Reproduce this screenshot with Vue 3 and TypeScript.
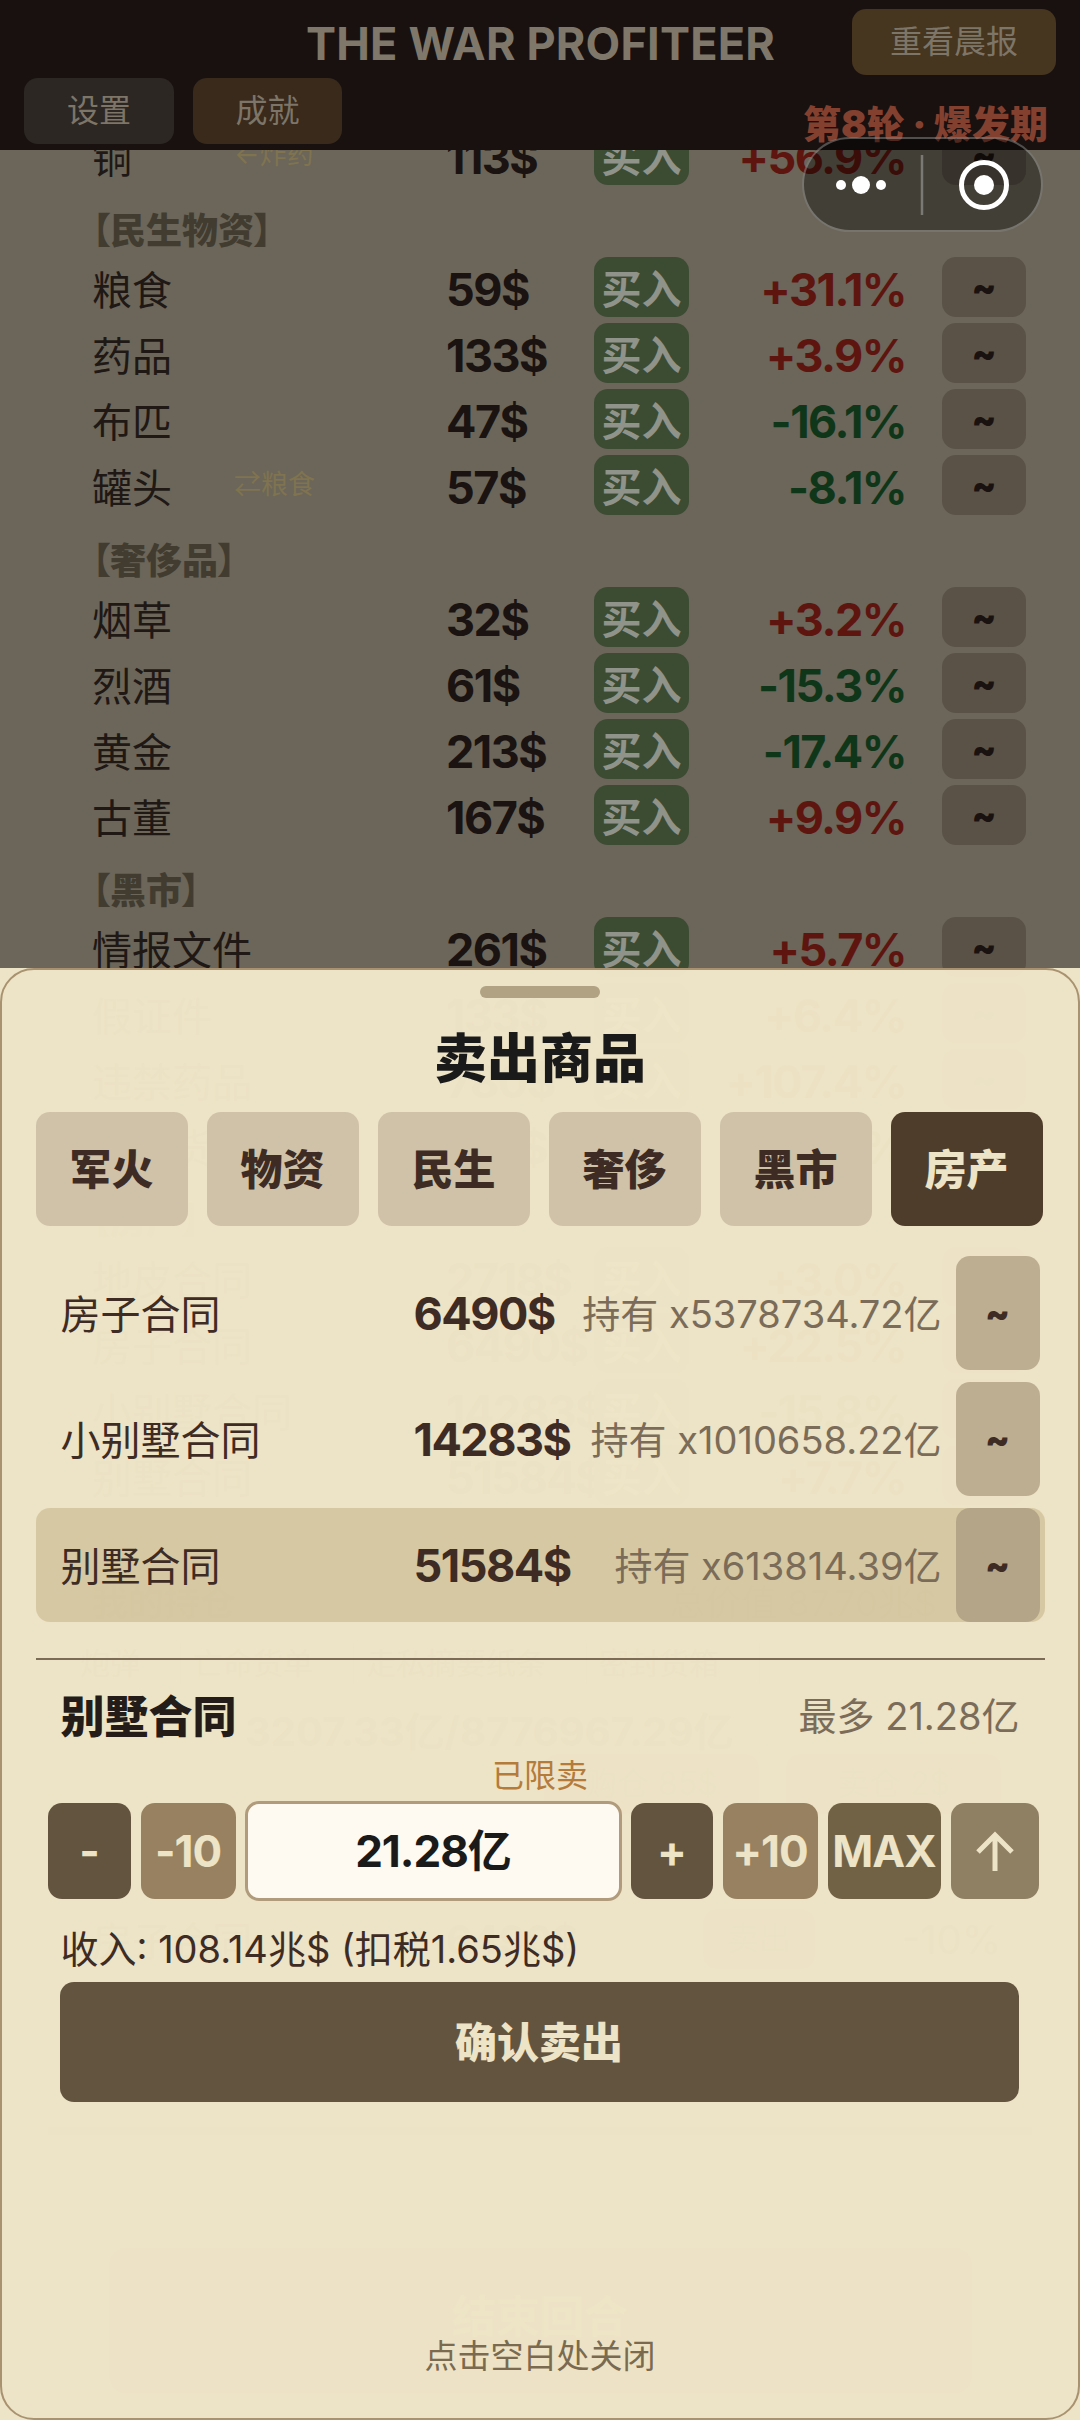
<script setup lang="ts">
interface Row { name: string; sub?: string; price: string; pct: string }
interface Section { title?: string; rows: Row[] }

const sections: Section[] = [
  { rows: [{ name: '铜', sub: '←炸药', price: '113$', pct: '+56.9%' }] },
  { title: '【民生物资】', rows: [
    { name: '粮食', price: '59$', pct: '+31.1%' },
    { name: '药品', price: '133$', pct: '+3.9%' },
    { name: '布匹', price: '47$', pct: '-16.1%' },
    { name: '罐头', sub: '⇄粮食', price: '57$', pct: '-8.1%' },
  ] },
  { title: '【奢侈品】', rows: [
    { name: '烟草', price: '32$', pct: '+3.2%' },
    { name: '烈酒', price: '61$', pct: '-15.3%' },
    { name: '黄金', price: '213$', pct: '-17.4%' },
    { name: '古董', price: '167$', pct: '+9.9%' },
  ] },
  { title: '【黑市】', rows: [
    { name: '情报文件', price: '261$', pct: '+5.7%' },
    { name: '假证件', price: '133$', pct: '+6.4%' },
    { name: '违禁药品', price: '780$', pct: '+107.4%' },
    { name: '走私货', price: '418$', pct: '-2.6%' },
  ] },
  { title: '【房产】', rows: [
    { name: '地皮合同', price: '2718$', pct: '+3.0%' },
    { name: '房子合同', price: '6490$', pct: '+22.5%' },
    { name: '小别墅合同', price: '14283$', pct: '-15.8%' },
    { name: '别墅合同', price: '51584$', pct: '+7.7%' },
  ] },
]

const chips = ['炮弹', '亡命货单', '走私摘要纸条', '密封货箱']
const tabs = ['军火', '物资', '民生', '奢侈', '黑市', '房产']
const holdings = [
  { name: '房子合同', price: '6490$', hold: '持有 x5378734.72亿', on: false },
  { name: '小别墅合同', price: '14283$', hold: '持有 x1010658.22亿', on: false },
  { name: '别墅合同', price: '51584$', hold: '持有 x613814.39亿', on: true },
]
</script>

<template>
  <div class="screen">
    <header class="top">
      <div class="top-line">
        <div class="game-title">THE WAR PROFITEER</div>
        <button class="tb tb-gold replay">重看晨报</button>
      </div>
      <div class="top-line second">
        <button class="tb tb-grey">设置</button>
        <button class="tb tb-brown">成就</button>
        <div class="round">第8轮 · 爆发期</div>
      </div>
    </header>

    <div class="scroller">
      <section v-for="(s, i) in sections" :key="i" class="sec">
        <div v-if="s.title" class="sec-title">{{ s.title }}</div>
        <div class="rows">
          <div v-for="r in s.rows" :key="r.name" class="row">
            <span class="r-name">{{ r.name }}</span>
            <span class="r-sub">{{ r.sub }}</span>
            <span class="r-price">{{ r.price }}</span>
            <button class="r-buy">买入</button>
            <span class="r-pct" :class="r.pct.startsWith('+') ? 'up' : 'down'">{{ r.pct }}</span>
            <button class="r-more">~</button>
          </div>
        </div>
      </section>

      <div class="assets">
        <div class="assets-head"><span>我的持仓</span><span class="muted">总价值 87.70兆$</span></div>
        <div class="assets-list"><span v-for="c in chips" :key="c" class="chip">{{ c }}</span></div>
        <div class="assets-cap">3207.33亿/8776967.29亿</div>
        <div class="assets-btns"><span class="g-btn">购仓 85$</span><span class="g-btn">卖仓 2$</span></div>
        <div class="assets-row"><span class="ar-name">房子合同</span><span class="ar-price">6490$</span><span class="g-btn tall">卖出</span><span class="ar-pct">-10%</span></div>
      </div>
      <div class="ghost-bar"></div>
      <div class="end-turn">结束回合</div>
    </div>

    <div class="capsule">
      <svg class="cap-ico" width="241" height="95" viewBox="0 0 241 95" fill="none">
        <circle cx="39" cy="48" r="5" fill="#fff" />
        <circle cx="59" cy="48" r="9" fill="#fff" />
        <circle cx="79" cy="48" r="5" fill="#fff" />
        <path d="M120 18V78" stroke="rgba(255,255,255,.3)" stroke-width="2.5" />
        <circle cx="182" cy="48" r="22.5" stroke="#fff" stroke-width="5" />
        <circle cx="182" cy="48" r="10" fill="#fff" />
      </svg>
    </div>

    <aside class="sheet">
      <div class="frame">
        <div class="handle"></div>
        <h2 class="sheet-title">卖出商品</h2>
        <nav class="tabs">
          <button v-for="t in tabs" :key="t" class="tab" :class="{ active: t === '房产' }">{{ t }}</button>
        </nav>
        <div class="holds">
          <div v-for="h in holdings" :key="h.name" class="hold" :class="{ on: h.on }">
            <span class="h-name">{{ h.name }}</span>
            <span class="h-price">{{ h.price }}</span>
            <span class="h-qty">{{ h.hold }}</span>
            <button class="h-more">~</button>
          </div>
        </div>
        <div class="rule"></div>
        <div class="pick">
          <span class="pick-name">别墅合同</span>
          <span class="pick-max">最多 21.28亿</span>
        </div>
        <div class="limit">已限卖</div>
        <div class="stepper">
          <button class="st dark">-</button>
          <button class="st tan">-10</button>
          <div class="qty">21.28亿</div>
          <button class="st dark">+</button>
          <button class="st tan">+10</button>
          <button class="st olive">MAX</button>
          <button class="st khaki">
            <svg width="40" height="40" viewBox="0 0 40 40" fill="none" stroke="#ede3c6" stroke-width="5">
              <path d="M20 40V4M3 21 20 4l17 17" />
            </svg>
          </button>
        </div>
        <div class="income">收入: 108.14兆$ (扣税1.65兆$)</div>
        <button class="confirm">确认卖出</button>
        <div class="close-hint">点击空白处关闭</div>
      </div>
    </aside>
  </div>
</template>

<style>
html, body { margin: 0; padding: 0; background: #6b6659; }
</style>

<style scoped>
* { box-sizing: border-box; }
button { border: 0; padding: 0; margin: 0; font: inherit; color: inherit; }
.screen {
  position: relative;
  width: 1080px;
  height: 2420px;
  overflow: hidden;
  display: flex;
  flex-direction: column;
  background: #6b6659;
  font-family: Inter, "Noto Sans CJK SC", sans-serif;
  color: #1c1512;
}
.top {
  position: relative;
  z-index: 2;
  flex: none;
  height: 150px;
  background: #181110;
  padding: 9px 24px 0;
}
.top-line { display: flex; align-items: flex-start; height: 69px; position: relative; }
.second { height: 66px; gap: 19px; }
.game-title {
  position: absolute;
  left: 282px;
  top: 11px;
  white-space: nowrap;
  font-size: 45px;
  line-height: 48px;
  font-weight: 700;
  letter-spacing: 0.2px;
  color: #7f786a;
}
.replay { margin-left: auto; }
.tb {
  height: 66px;
  border-radius: 14px;
  font-size: 32px;
  line-height: 66px;
  color: #7d7567;
  text-align: center;
}
.tb-gold { width: 204px; background: #46351f; }
.tb-grey { width: 150px; background: #2d2723; }
.tb-brown { width: 149px; background: #392a1c; }
.round {
  position: absolute;
  right: 8px;
  top: 26px;
  font-size: 38px;
  line-height: 40px;
  font-weight: 900;
  color: #84402f;
  white-space: nowrap;
}
.scroller { flex: none; height: 2270px; overflow: hidden; margin-top: -25px; position: relative; z-index: 0; }
.sec { padding-left: 92px; }
.sec-title {
  height: 72px;
  padding-top: 24px;
  font-size: 36px;
  line-height: 44px;
  font-weight: 900;
  font-feature-settings: "palt";
  color: #423c30;
}
.rows { display: flex; flex-direction: column; gap: 6px; }
.row {
  display: grid;
  grid-template-columns: 142px 212px 148px 95px 217px 36px 84px;
  grid-template-rows: 60px;
  align-items: center;
  height: 60px;
  white-space: nowrap;
}
.r-name { font-size: 40px; line-height: 60px; margin-top: 7px; color: #1f1815; grid-column: 1; }
.r-sub { font-size: 27px; line-height: 40px; color: #7f7350; }
.r-price { font-size: 45px; letter-spacing: -1.5px; line-height: 60px; margin-top: 6px; font-weight: 700; color: #1a1311; }
.r-buy { grid-column: 4; height: 60px; border-radius: 14px; background: #3c4c33; color: #8f938a; font-size: 40px; font-weight: 700; }
.r-pct { grid-column: 5; text-align: right; font-size: 45px; letter-spacing: -1.5px; line-height: 60px; margin-top: 6px; font-weight: 700; }
.up { color: #5e1510; }
.down { color: #10361a; }
.r-more { grid-column: 7; height: 60px; border-radius: 14px; background: #5a5246; font-size: 36px; font-weight: 900; color: #1a1210; }
.assets { padding: 78px 143px 0 92px; color: #1c1512; }
.assets-head { display: flex; justify-content: space-between; font-size: 36px; line-height: 40px; font-weight: 700; }
.muted { font-weight: 400; }
.assets-list { display: flex; margin: 20px -60px 0 -12px; font-size: 30px; line-height: 40px; }
.chip { padding: 0 40px 0 0; margin-right: 12px; border-right: 1px solid #3c382f; }
.assets-cap { margin: 27px 0 0 153px; font-size: 40px; line-height: 44px; font-weight: 700; }
.assets-btns { display: flex; gap: 27px; margin: 0 -64px 0 452px; }
.g-btn { width: 215px; height: 60px; line-height: 60px; text-align: center; background: #5a5246; border-radius: 14px; font-size: 32px; }
.assets-row { display: flex; align-items: center; margin-top: 95px; font-size: 40px; white-space: nowrap; }
.ar-name { width: 354px; }
.ar-price { width: 257px; font-weight: 700; }
.g-btn.tall { width: 112px; height: 60px; }
.ar-pct { width: 186px; margin-right: -64px; text-align: right; }
.ghost-bar { margin: 158px 48px 0; height: 8px; background: #3c382f; }
.end-turn {
  margin: 113px auto 0;
  width: 863px;
  height: 145px;
  border-radius: 16px;
  background: #5a5246;
  text-align: center;
  padding-top: 44px;
  line-height: 50px;
  font-size: 44px;
  font-weight: 700;
  color: #8d8778;
}
.capsule {
  position: absolute;
  z-index: 3;
  left: 802px;
  top: 137px;
  width: 241px;
  height: 95px;
  border-radius: 48px;
  background: rgba(0, 0, 0, 0.38);
  border: 2px solid rgba(255, 255, 255, 0.28);
}
.cap-ico { position: absolute; left: -2px; top: -2px; }
.sheet {
  position: absolute;
  z-index: 4;
  left: 0;
  right: 0;
  top: 968px;
  bottom: 0;
  background: rgba(240, 230, 200, 0.98);
  color: #3e2c24;
}
.frame {
  height: 100%;
  border: 2.5px solid #a89270;
  border-radius: 34px;
  display: flex;
  flex-direction: column;
  padding: 15.5px 33.5px 0;
}
.handle { flex: none; align-self: center; width: 120px; height: 12px; border-radius: 6px; background: #b0a283; }
.sheet-title {
  flex: none;
  margin: 28px 0 0;
  text-align: center;
  font-size: 53px;
  line-height: 66px;
  font-weight: 900;
  color: #1a1a1a;
}
.tabs { flex: none; display: grid; grid-template-columns: repeat(6, 152px); column-gap: 19px; margin-top: 20px; }
.tab { height: 114px; border-radius: 14px; background: #cfc2a9; font-size: 42px; font-weight: 900; color: #3e2c24; padding-bottom: 5px; }
.tab.active { background: #4e3d2a; color: #ede3c6; }
.holds { flex: none; display: flex; flex-direction: column; gap: 12px; margin-top: 30px; }
.hold {
  height: 114px;
  display: flex;
  align-items: center;
  padding: 0 5px 0 25px;
  border-radius: 14px;
  white-space: nowrap;
}
.hold.on { background: rgba(194, 178, 133, 0.55); }
.h-name { width: 353px; font-size: 40px; margin-bottom: 2px; }
.h-price { font-size: 45px; letter-spacing: -1.5px; font-weight: 700; margin-top: 2px; }
.h-qty { margin-left: auto; font-size: 38px; color: #7a6c58; margin-bottom: 2px; }
.h-more { flex: none; width: 84px; height: 114px; margin-left: 14px; border-radius: 14px; background: #bdae92; font-size: 36px; font-weight: 900; color: #3e2c24; }
.hold.on .h-more { background: #b5a588; }
.rule { flex: none; height: 2px; margin-top: 36px; background: #7a6c55; }
.pick { flex: none; display: flex; justify-content: space-between; align-items: center; padding: 0 25px; margin-top: 28px; height: 52px; }
.pick-name { font-size: 44px; font-weight: 900; color: #231c18; }
.pick-max { font-size: 38px; color: #7a6c58; }
.limit { flex: none; margin-top: 16px; text-align: center; font-size: 32px; line-height: 40px; color: #b47b3a; }
.stepper {
  flex: none;
  display: grid;
  grid-template-columns: 83px 95px 375px 82px 95px 113px 88px;
  column-gap: 10px;
  align-items: center;
  height: 100px;
  margin: 5px 0 0 12px;
}
.st { height: 96px; border-radius: 14px; color: #ede3c6; font-size: 44px; letter-spacing: -1px; font-weight: 700; display: flex; align-items: center; justify-content: center; white-space: nowrap; }
.dark { background: #635440; }
.tan { background: #978160; }
.olive { background: #716246; }
.khaki { background: #8f8064; }
.qty { height: 100px; margin: 0 -1px; border: 3px solid #b09c7c; border-radius: 14px; background: #fefaf2; color: #1a1a1a; font-size: 44px; letter-spacing: -1px; font-weight: 700; line-height: 94px; text-align: center; }
.income { flex: none; margin: 24px 0 0 25px; font-size: 38px; line-height: 48px; color: #3e2c24; white-space: nowrap; }
.confirm { flex: none; width: 959px; height: 120px; margin: 9px 0 0 24px; border-radius: 14px; background: #635440; color: #ede3c6; font-size: 42px; font-weight: 800; padding-bottom: 4px; }
.close-hint { margin-top: auto; margin-bottom: 41px; text-align: center; font-size: 33px; line-height: 42px; color: #7a6a50; }
</style>
